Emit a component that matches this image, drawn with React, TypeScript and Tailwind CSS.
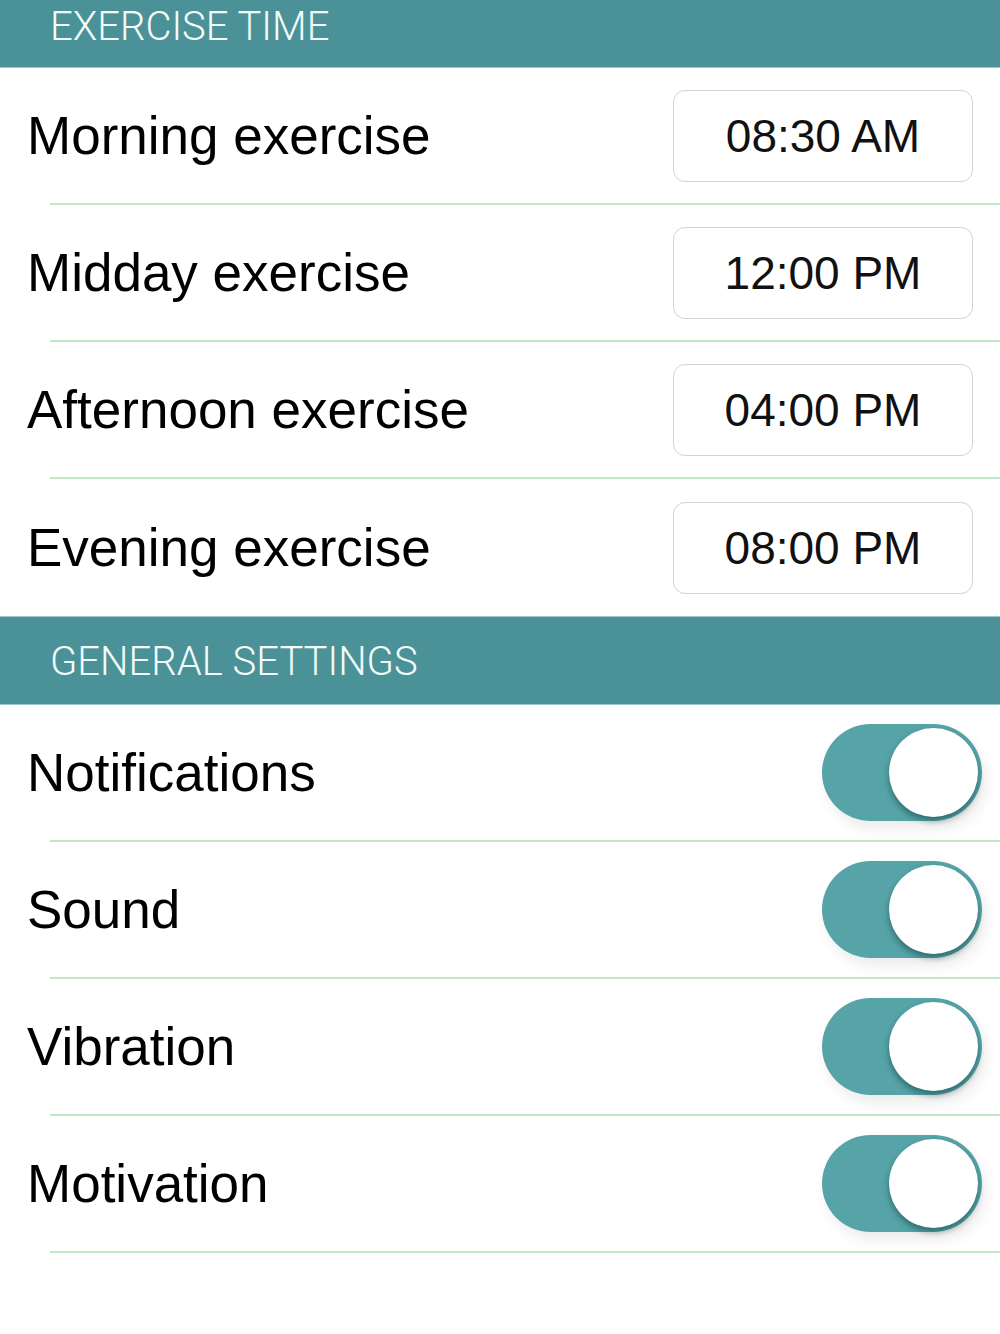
import React from "react";

const font = { fontFamily: '"Liberation Sans", Arial, sans-serif' };

function Header({ title, first = false }: { title: string; first?: boolean }) {
  return (
    <div
      className={`flex items-end bg-[#4a9297] pl-[50px] border-b border-[#9cc8ca] ${first ? "h-[68px] pb-[20px]" : "h-[89px] pb-[22px] border-t"}`}
    >
      <span
        className="text-[40px] leading-none text-[#f4fbfb] font-light"
        style={{ fontFamily: 'Roboto, "Liberation Sans", sans-serif' }}
      >
        {title}
      </span>
    </div>
  );
}

function Row({ label, children, sep = true }: { label: string; children: React.ReactNode; sep?: boolean }) {
  return (
    <div>
      <div className={`flex items-center justify-between pl-[27px] ${sep ? "h-[135px]" : "h-[137px]"}`}>
        <span className="text-[53px] leading-none text-black" style={font}>{label}</span>
        {children}
      </div>
      {sep && <div className="ml-[50px] h-[2px] bg-[#bfe9c6]" />}
    </div>
  );
}

function TimeBox({ value }: { value: string }) {
  return (
    <div className="mr-[27px] flex h-[92px] w-[300px] items-center justify-center rounded-[12px] border-[1.5px] border-[#d2d2d2]">
      <span className="text-[46px] leading-none text-[#111]" style={font}>{value}</span>
    </div>
  );
}

function Toggle() {
  return (
    <div className="relative mr-[18px] h-[97px] w-[160px] rounded-full bg-[#56a4a8] shadow-[4px_8px_14px_rgba(0,0,0,0.08)]">
      <div className="absolute right-[4px] top-[4px] h-[89px] w-[89px] rounded-full bg-white shadow-[0_4px_6px_rgba(0,40,40,0.45)]" />
    </div>
  );
}

export default function App() {
  const times = [
    ["Morning exercise", "08:30 AM"],
    ["Midday exercise", "12:00 PM"],
    ["Afternoon exercise", "04:00 PM"],
    ["Evening exercise", "08:00 PM"],
  ];
  const toggles = ["Notifications", "Sound", "Vibration", "Motivation"];
  return (
    <div className="h-[1334px] w-[1000px] overflow-hidden bg-white">
      <Header title="EXERCISE TIME" first />
      {times.map(([l, t], i) => (
        <Row key={l} label={l} sep={i < times.length - 1}>
          <TimeBox value={t} />
        </Row>
      ))}
      <Header title="GENERAL SETTINGS" />
      {toggles.map((l) => (
        <Row key={l} label={l}>
          <Toggle />
        </Row>
      ))}
    </div>
  );
}
